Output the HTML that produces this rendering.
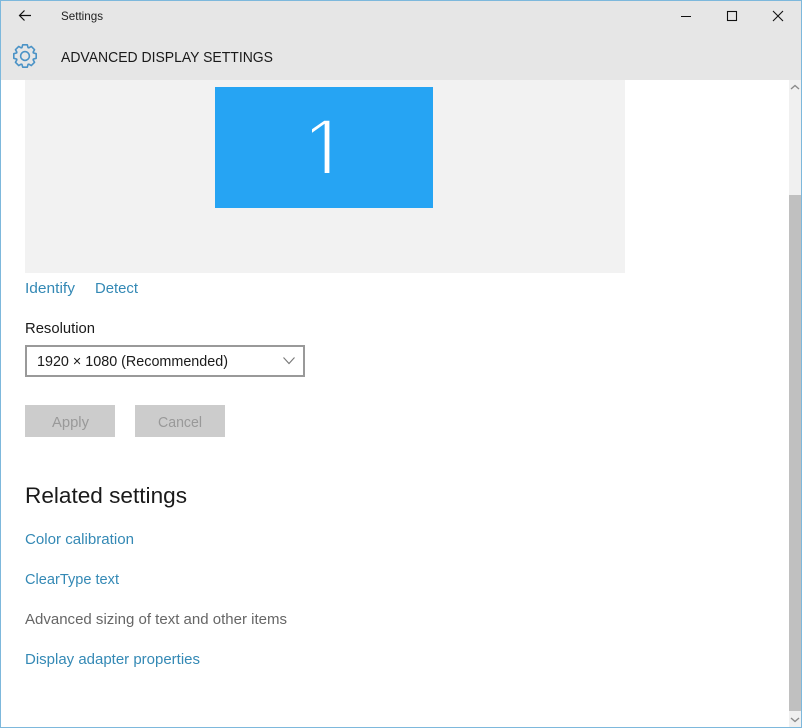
<!DOCTYPE html>
<html><head><meta charset="utf-8"><title>Settings</title>
<style>
html,body{margin:0;padding:0;background:#fff}
svg{display:block}
text{font-family:"Liberation Sans",sans-serif;font-size:15px}
.l{fill:#3489b5}
</style></head><body>
<svg width="802" height="728" viewBox="0 0 802 728" xmlns="http://www.w3.org/2000/svg">
<defs><clipPath id="c1"><rect x="312" y="110" width="40" height="63"/></clipPath></defs>
<rect width="802" height="728" fill="#fff"/>
<rect x="0" y="0" width="802" height="80" fill="#e6e6e6"/>
<!-- back arrow -->
<path d="M19.5 15.5H31M24.5 10.5L19.5 15.5L24.5 20.5" fill="none" stroke="#111" stroke-width="1.2"/>
<text x="61" y="20" style="font-size:12px" fill="#222" textLength="42" lengthAdjust="spacingAndGlyphs">Settings</text>
<!-- window controls -->
<rect x="681" y="16" width="10" height="1" fill="#111"/>
<rect x="727.5" y="11.5" width="9" height="9" fill="none" stroke="#111" stroke-width="1.1"/>
<path d="M773 11L783 21M783 11L773 21" stroke="#111" stroke-width="1.1" fill="none"/>
<!-- gear -->
<g transform="translate(25 56)" fill="none" stroke="#4a92c6" stroke-width="1.6" stroke-linejoin="round">
<circle r="4.4"/>
<path d="M-3.23-7.8L-2.3-11.2L2.3-11.2L3.23-7.8"/>
<path transform="rotate(45)" d="M-3.23-7.8L-2.3-11.2L2.3-11.2L3.23-7.8"/>
<path transform="rotate(90)" d="M-3.23-7.8L-2.3-11.2L2.3-11.2L3.23-7.8"/>
<path transform="rotate(135)" d="M-3.23-7.8L-2.3-11.2L2.3-11.2L3.23-7.8"/>
<path transform="rotate(180)" d="M-3.23-7.8L-2.3-11.2L2.3-11.2L3.23-7.8"/>
<path transform="rotate(225)" d="M-3.23-7.8L-2.3-11.2L2.3-11.2L3.23-7.8"/>
<path transform="rotate(270)" d="M-3.23-7.8L-2.3-11.2L2.3-11.2L3.23-7.8"/>
<path transform="rotate(315)" d="M-3.23-7.8L-2.3-11.2L2.3-11.2L3.23-7.8"/>
</g>
<text x="61" y="62" fill="#1a1a1a" textLength="212" lengthAdjust="spacingAndGlyphs">ADVANCED DISPLAY SETTINGS</text>
<!-- monitor panel -->
<rect x="25" y="80" width="600" height="193" fill="#f2f2f2"/>
<rect x="215" y="87" width="218" height="121" fill="#26a4f3"/>
<text x="301" y="180" clip-path="url(#c1)" style="font-size:88px" fill="#fff" stroke="#26a4f3" stroke-width="3">1</text>
<!-- links -->
<text x="25" y="293" class="l" textLength="50" lengthAdjust="spacingAndGlyphs">Identify</text>
<text x="95" y="293" class="l" textLength="43" lengthAdjust="spacingAndGlyphs">Detect</text>
<text x="25" y="333" fill="#1a1a1a" textLength="70" lengthAdjust="spacingAndGlyphs">Resolution</text>
<!-- combo -->
<rect x="26" y="346" width="278" height="30" fill="#fff" stroke="#999" stroke-width="2"/>
<text x="37" y="366" fill="#1a1a1a" textLength="191" lengthAdjust="spacingAndGlyphs">1920 × 1080 (Recommended)</text>
<path d="M283.5 357.5L289 363.5L294.5 357.5" fill="none" stroke="#777" stroke-width="1.1"/>
<!-- buttons -->
<rect x="25" y="405" width="90" height="32" fill="#ccc"/>
<rect x="135" y="405" width="90" height="32" fill="#ccc"/>
<text x="52" y="427" fill="#999" textLength="37" lengthAdjust="spacingAndGlyphs">Apply</text>
<text x="158" y="427" fill="#999" textLength="44" lengthAdjust="spacingAndGlyphs">Cancel</text>
<!-- related -->
<text x="25" y="503" style="font-size:22px" fill="#1a1a1a" textLength="162" lengthAdjust="spacingAndGlyphs">Related settings</text>
<text x="25" y="544" class="l" textLength="109" lengthAdjust="spacingAndGlyphs">Color calibration</text>
<text x="25" y="584" class="l" textLength="94" lengthAdjust="spacingAndGlyphs">ClearType text</text>
<text x="25" y="624" fill="#666" textLength="262" lengthAdjust="spacingAndGlyphs">Advanced sizing of text and other items</text>
<text x="25" y="664" class="l" textLength="175" lengthAdjust="spacingAndGlyphs">Display adapter properties</text>
<!-- scrollbar -->
<rect x="789" y="80" width="12" height="647" fill="#f0f0f0"/>
<rect x="789" y="195" width="12" height="516" fill="#c0c0c0"/>
<path d="M791 89L795 85.5L799 89" fill="none" stroke="#8a8a8a" stroke-width="1.4"/>
<path d="M791 718L795 721.5L799 718" fill="none" stroke="#8a8a8a" stroke-width="1.4"/>
<!-- window border -->
<rect x="0.5" y="0.5" width="801" height="727" fill="none" stroke="#7db8dc" stroke-width="1"/>
</svg>
</body></html>
